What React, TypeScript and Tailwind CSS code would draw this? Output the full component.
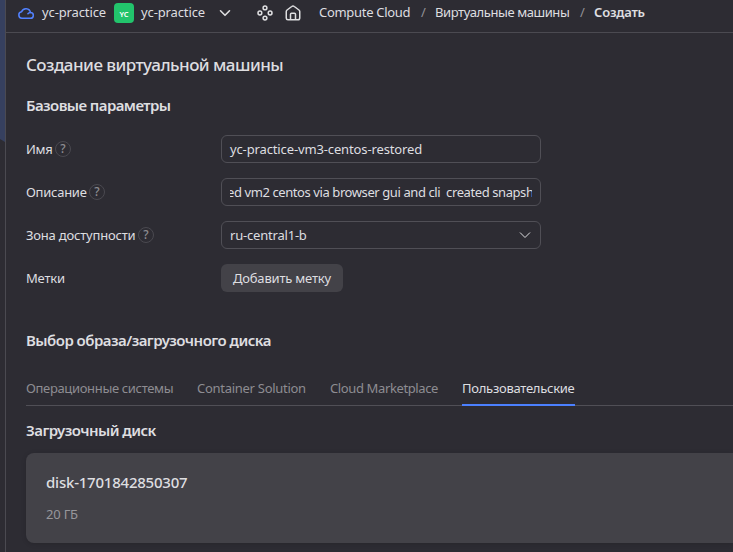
import type { ReactNode } from 'react';

function CloudIcon() {
  return (
    <svg className="h-4 w-4 shrink-0" viewBox="0 0 16 16" fill="none" stroke="#5282ff" strokeWidth="1.5" strokeLinejoin="round" strokeLinecap="round">
      <path d="M3.800 13.250h8.600a2.850 2.850 0 0 0 .100-5.700A4.600 4.600 0 0 0 3.600 6.800a3.250 3.250 0 0 0 .200 6.450Z" />
      <path d="M12.500 7.550c-1.200 0-2 .4-2.600 1.200" />
    </svg>
  );
}

function ServicesIcon() {
  return (
    <svg className="h-4 w-4 shrink-0" viewBox="0 0 16 16" fill="none" stroke="#dedee0" strokeWidth="1.5">
      <circle cx="8" cy="2.900" r="1.900" />
      <circle cx="2.900" cy="8" r="1.900" />
      <circle cx="13.100" cy="8" r="1.900" />
      <circle cx="8" cy="13.100" r="1.900" />
    </svg>
  );
}

function HomeIcon() {
  return (
    <svg className="h-4 w-4 shrink-0" viewBox="0 0 16 16" fill="none" stroke="#dedee0" strokeWidth="1.5" strokeLinejoin="round">
      <path d="M1.250 6.600a2 2 0 0 1 .8-1.600l4.700-3.500a2 2 0 0 1 2.500 0l4.700 3.500a2 2 0 0 1 .8 1.600V13a1.800 1.800 0 0 1-1.800 1.800H3A1.800 1.800 0 0 1 1.250 13Z" />
      <path d="M5.500 14.800V9.300a1 1 0 0 1 1-1h3a1 1 0 0 1 1 1v5.500" />
    </svg>
  );
}

function Help() {
  return (
    <span className="flex h-4 w-4 shrink-0 items-center justify-center rounded-full border border-[#4a4950] text-[12px] leading-none font-medium text-[#8d8c92]">
      ?
    </span>
  );
}

function Row({ label, help, children }: { label: ReactNode; help?: boolean; children: ReactNode }) {
  return (
    <div className="flex h-7 items-center">
      <div className="flex w-[195px] shrink-0 items-center gap-[3px] whitespace-nowrap">
        {label}
        {help && <Help />}
      </div>
      {children}
    </div>
  );
}

export default function App() {
  return (
    <div className="flex h-[552px] w-[733px] overflow-hidden bg-[#2d2c33] font-['Noto_Sans',sans-serif] text-[13px] leading-[18px] whitespace-nowrap text-[#dedee0]">
      <aside className="w-[6px] shrink-0 border-r border-[#4b4a51]">
        <svg className="block h-[142px] w-[5px]" viewBox="0 0 5 142">
          <path d="M0 0h5v142L0 139Z" fill="#36405f" />
        </svg>
      </aside>
      <div className="flex min-w-0 flex-1 flex-col">
        <header className="flex h-[33px] shrink-0 items-center border-b border-[#4b4a51] pb-[7px] pl-3">
          <CloudIcon />
          <span className="ml-2 w-[64px] pb-[2px] tracking-[-0.12px]">yc-practice</span>
          <span className="ml-2 flex h-5 w-5 items-center justify-center rounded-[4px] bg-[#22c46c] pt-[2px] text-[7.5px] font-semibold text-white">YC</span>
          <span className="ml-[7px] w-[64px] pb-[2px] tracking-[-0.12px]">yc-practice</span>
          <svg className="ml-[14px] h-3 w-3" viewBox="0 0 12 12" fill="none" stroke="#dedee0" strokeWidth="1.6" strokeLinecap="round" strokeLinejoin="round">
            <path d="m1.500 3.800 4.500 4.500 4.500-4.500" />
          </svg>
          <span className="ml-[26px] flex"><ServicesIcon /></span>
          <span className="ml-3 flex"><HomeIcon /></span>
          <nav className="ml-[18px] flex pb-[2px]">
            <span className="w-[102px] tracking-[-0.3px]">Compute Cloud</span>
            <span className="w-[14px] text-[#929196]">/</span>
            <span className="w-[145px] tracking-[-0.42px]">Виртуальные машины</span>
            <span className="w-[14px] text-[#929196]">/</span>
            <span className="font-semibold tracking-[-0.2px]">Создать</span>
          </nav>
        </header>
        <main className="flex flex-col pl-5">
          <h1 className="mt-5 h-6 text-[17px] leading-6 font-medium tracking-[-0.54px]">
            <span>Создание виртуальной машины</span>
          </h1>
          <h2 className="mt-[18px] h-5 text-[15px] leading-5 font-semibold tracking-[-0.58px]">
            <span>Базовые параметры</span>
          </h2>
          <div className="mt-5 flex flex-col gap-[15px]">
            <Row help label={<span className="w-[26px] tracking-[-0.3px]">Имя</span>}>
              <div className="flex h-7 w-[320px] items-center rounded-md border border-[#504f56] px-2">
                <span className="tracking-[-0.13px]">yc-practice-vm3-centos-restored</span>
              </div>
            </Row>
            <Row help label={<span className="w-[60px] tracking-[-0.27px]">Описание</span>}>
              <div className="flex h-7 w-[320px] items-center rounded-md border border-[#504f56] px-2">
                <div className="flex w-[302px] overflow-hidden">
                  <span className="-ml-[3px] tracking-[-0.41px] whitespace-pre">ed vm2 centos via browser gui and cli  created snapsh</span>
                </div>
              </div>
            </Row>
            <Row help label={<span className="w-[109px] tracking-[-0.2px]">Зона доступности</span>}>
              <div className="flex h-7 w-[320px] items-center justify-between rounded-md border border-[#504f56] px-2">
                <span className="tracking-[-0.2px]">ru-central1-b</span>
                <svg className="mr-[1px] h-3 w-3" viewBox="0 0 12 12" fill="none" stroke="#dedee0" strokeWidth="1">
                  <path d="m1 3.500 5 5 5-5" />
                </svg>
              </div>
            </Row>
            <Row label={<span className="tracking-[-0.2px]">Метки</span>}>
              <button className="flex h-7 w-[122px] items-center rounded-md bg-[#434248] pl-3">
                <span className="tracking-[-0.2px]">Добавить метку</span>
              </button>
            </Row>
          </div>
          <h2 className="mt-[38px] h-5 text-[15px] leading-5 font-semibold tracking-[-0.53px]">
            <span>Выбор образа/загрузочного диска</span>
          </h2>
          <div className="mt-5 flex h-[36px] gap-6 border-b border-[#504f56] pt-[9px] text-[#8d8c92]">
            <span className="w-[147px] tracking-[-0.34px]">Операционные системы</span>
            <span className="w-[109px] tracking-[-0.28px]">Container Solution</span>
            <span className="w-[108px] tracking-[-0.38px]">Cloud Marketplace</span>
            <span className="h-[27px] w-[113px] border-b-2 border-[#4b80ff] tracking-[-0.27px] text-[#dedee0]">Пользовательские</span>
          </div>
          <h3 className="mt-[14px] h-5 text-[15px] leading-5 font-semibold tracking-[-0.56px]">
            <span>Загрузочный диск</span>
          </h3>
          <section className="mt-[13px] h-[90px] rounded-l-lg bg-[#434248] pt-[19px] pl-5 shadow-[0_1px_5px_rgba(0,0,0,0.15)]">
            <div className="h-5 text-[15px] leading-5 font-medium tracking-[-0.22px]"><span>disk-1701842850307</span></div>
            <div className="mt-[13px] tracking-[-0.2px] text-[#97969b]"><span>20 ГБ</span></div>
          </section>
        </main>
      </div>
    </div>
  );
}
